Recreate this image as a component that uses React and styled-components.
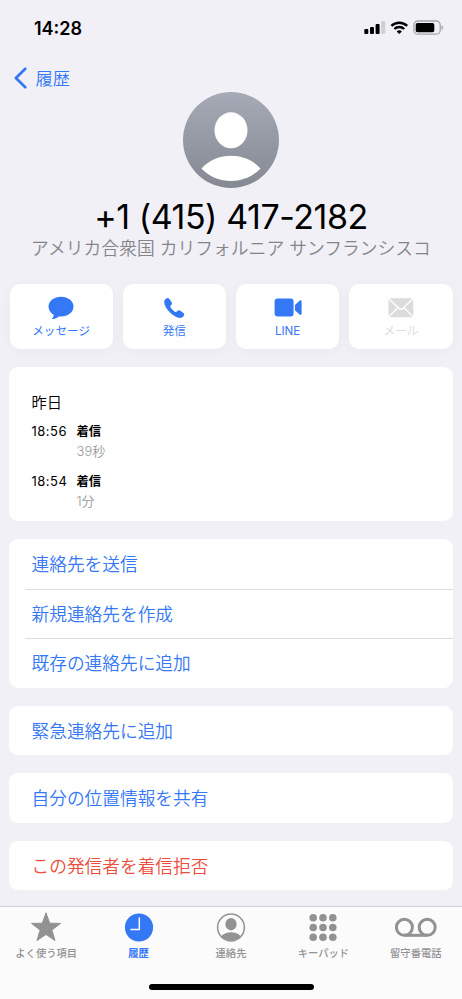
import React from "react";
import styled, { createGlobalStyle } from "styled-components";

const blue = "#3478f6";
const gray = "#929294";

const actions = [
  { label: "メッセージ", icon: "message" },
  { label: "発信", icon: "phone" },
  { label: "LINE", icon: "video" },
  { label: "メール", icon: "mail", disabled: true },
];

const calls = [
  { time: "18:56", type: "着信", duration: "39秒" },
  { time: "18:54", type: "着信", duration: "1分" },
];

const groups = [
  ["連絡先を送信", "新規連絡先を作成", "既存の連絡先に追加"],
  ["緊急連絡先に追加"],
  ["自分の位置情報を共有"],
];

const tabs = [
  { label: "よく使う項目", icon: "star" },
  { label: "履歴", icon: "clock", active: true },
  { label: "連絡先", icon: "person" },
  { label: "キーパッド", icon: "keypad" },
  { label: "留守番電話", icon: "voicemail" },
];

const StatusIcons = () => (
  <svg width="80" height="16" viewBox="0 0 80 16">
    <rect x="0.3" y="9" width="4" height="5" rx="1" />
    <rect x="6" y="7" width="4" height="7" rx="1" />
    <rect x="11.6" y="4" width="4" height="10" rx="1" />
    <rect x="17.2" y="1" width="4" height="13" rx="1" fill="#cfcfd3" />
    <g fill="none" stroke="#000" strokeWidth="2.4">
      <path d="M27.4 5.9a11.3 11.3 0 0 1 15.8 0" />
      <path d="M30.4 9a7 7 0 0 1 9.8 0" />
    </g>
    <path d="M35.3 14.1l-2.6-2.6a3.8 3.8 0 0 1 5.2 0z" />
    <rect x="49.9" y="1" width="26.3" height="13.2" rx="4" fill="none" stroke="#a5a5a9" strokeWidth="1.3" />
    <rect x="51.7" y="2.9" width="18.6" height="9.4" rx="1.8" />
    <path d="M77.5 5.3c2.2.8 2.2 3.8 0 4.6z" fill="#a5a5a9" />
  </svg>
);

const ActionIcon = ({ name }) => (
  <svg width="30" height="26" viewBox="0 0 30 26" fill="currentColor">
    {name === "message" && (
      <path d="M15 2.7c-7 0-12.5 4.3-12.5 9.9 0 3.4 2 6.4 5.1 8.2.2 1.5-.5 2.7-1.6 3.7-.3.4 0 .7.5.6 2.5-.3 4.7-1.4 6.2-2.7.8.1 1.5.2 2.3.2 7 0 12.5-4.4 12.5-10S22 2.7 15 2.7z" />
    )}
    {name === "phone" && (
      <path d="M5.2 8.2c0-1.8.9-2.7 2-3.6 1-.8 2.3-.8 3.2.3l2.1 3c.8 1.2.7 2.1-.2 3l-.8.9c-.4.4-.4.8-.1 1.3.8 1.5 3.3 4 4.8 4.8.5.3.9.3 1.3-.1l.9-.8c.9-.9 1.9-1 3-.2l3 2.1c1.1.8 1.1 2.1.3 3.2-.9 1.1-1.9 1.9-3.7 1.9-3 0-7.2-2.7-10.3-5.7-3.1-3.1-5.500-7.200-5.500-10.100z" />
    )}
    {name === "video" && (
      <>
        <rect x="1.6" y="4.4" width="19" height="18.2" rx="3" />
        <path d="M21.9 11l4.4-4.1c1.2-1.1 2.3-.7 2.3.8v11.8c0 1.5-1.1 1.9-2.3.8l-4.4-4.100z" />
      </>
    )}
    {name === "mail" && (
      <>
        <rect x="2.5" y="4.2" width="24.8" height="19" rx="2" />
        <path
          d="M2.5 4.5l10.3 9.8c1.3 1.2 2.9 1.2 4.2 0l10.3-9.8M2.7 22.9l8.7-8.9M27.1 22.9l-8.700-8.900"
          fill="none"
          stroke="#fff"
          strokeWidth="1.3"
        />
      </>
    )}
  </svg>
);

const TabIcon = ({ name }) => (
  <svg width="44" height="32" viewBox="0 0 44 32" fill="currentColor">
    {name === "star" && (
      <path
        d="M22 1.8l3.7 10.4 10.8.2-8.6 6.700 3.100 10.500-9-6.200-9 6.200 3.100-10.500-8.600-6.700 10.800-.2z"
        stroke="currentColor"
        strokeWidth="1"
        strokeLinejoin="round"
      />
    )}
    {name === "clock" && (
      <>
        <circle cx="22" cy="16.5" r="14.1" />
        <path d="M22.3 7.1v11.3H14" fill="none" stroke="#fff" strokeWidth="1.5" strokeLinecap="round" strokeLinejoin="round" />
      </>
    )}
    {name === "person" && (
      <>
        <clipPath id="person-ring">
          <circle cx="22" cy="16.5" r="13" />
        </clipPath>
        <circle cx="22" cy="16.5" r="13.4" fill="none" stroke="currentColor" strokeWidth="1.5" />
        <ellipse cx="22" cy="13.2" rx="5.6" ry="6.2" />
        <ellipse cx="22" cy="28" rx="10.8" ry="6.8" clipPath="url(#person-ring)" />
      </>
    )}
    {name === "keypad" &&
      [6.7, 16.5, 26.3].map((y) =>
        [12.2, 22, 31.8].map((x) => <circle key={`${x}-${y}`} cx={x} cy={y} r="3.8" />)
      )}
    {name === "voicemail" && (
      <g fill="none" stroke="currentColor" strokeWidth="3">
        <circle cx="10.4" cy="16.3" r="8" />
        <circle cx="33.2" cy="16.3" r="8" />
        <path d="M10.4 24.3h22.8" />
      </g>
    )}
  </svg>
);

const App = () => {
  return (
    <StyledScreen>
      <GlobalStyle />
      <StyledStatusBar>
        <span>14:28</span>
        <StatusIcons />
      </StyledStatusBar>
      <StyledBack>
        <svg width="14" height="22" viewBox="0 0 14 22">
          <path
            d="M11.3 1.7L1.9 11l9.4 9.3"
            fill="none"
            stroke={blue}
            strokeWidth="2.7"
            strokeLinecap="round"
            strokeLinejoin="round"
          />
        </svg>
        <span>履歴</span>
      </StyledBack>
      <StyledProfile>
        <svg width="96" height="96" viewBox="0 0 96 96">
          <defs>
            <linearGradient id="avatar" x1="0" y1="0" x2="0" y2="1">
              <stop offset="0" stopColor="#a5aab6" />
              <stop offset="1" stopColor="#858992" />
            </linearGradient>
          </defs>
          <circle cx="48" cy="48" r="48" fill="url(#avatar)" />
          <ellipse cx="48" cy="38.3" rx="16.5" ry="18" fill="#fff" />
          <path d="M18.5 76.5C26 68 36.5 63.7 48 63.7s22 4.3 29.5 12.8C69.5 85 59 89 48 89s-21.500-4-29.500-12.500z" fill="#fff" />
        </svg>
        <h1>+1 (415) 417-2182</h1>
        <p>アメリカ合衆国 カリフォルニア サンフランシスコ</p>
      </StyledProfile>
      <StyledActions>
        {actions.map(({ label, icon, disabled }) => (
          <StyledAction key={label} disabled={disabled}>
            <ActionIcon name={icon} />
            <span>{label}</span>
          </StyledAction>
        ))}
      </StyledActions>
      <StyledContent>
        <StyledHistory>
          <h2>昨日</h2>
          {calls.map(({ time, type, duration }) => (
            <StyledCall key={time}>
              <time>{time}</time>
              <div>
                <strong>{type}</strong>
                <span>{duration}</span>
              </div>
            </StyledCall>
          ))}
        </StyledHistory>
        {groups.map((rows) => (
          <StyledCard key={rows[0]}>
            {rows.map((row) => (
              <StyledRow key={row}>{row}</StyledRow>
            ))}
          </StyledCard>
        ))}
        <StyledCard>
          <StyledRow $danger>この発信者を着信拒否</StyledRow>
        </StyledCard>
      </StyledContent>
      <StyledTabBar>
        <StyledTabs>
          {tabs.map(({ label, icon, active }) => (
            <StyledTab key={label} $active={active}>
              <TabIcon name={icon} />
              <span>{label}</span>
            </StyledTab>
          ))}
        </StyledTabs>
        <StyledHomeIndicator />
      </StyledTabBar>
    </StyledScreen>
  );
};

const GlobalStyle = createGlobalStyle`
  * {
    box-sizing: border-box;
  }

  body {
    margin: 0;
    background: #f1f0f6;
    font-family: Inter, "Noto Sans CJK JP", sans-serif;
  }

  svg {
    display: block;
    flex-shrink: 0;
  }
`;

const StyledScreen = styled.div`
  width: 462px;
  height: 999px;
  display: flex;
  flex-direction: column;
  overflow: hidden;
  white-space: nowrap;
`;

const StyledStatusBar = styled.div`
  height: 56px;
  padding: 0 18px 0 34px;
  display: flex;
  align-items: center;
  justify-content: space-between;
  font-size: 18px;
  font-weight: 600;
`;

const StyledBack = styled.div`
  height: 36px;
  padding: 8px 0 0 14px;
  display: flex;
  align-items: center;
  gap: 7.5px;
  color: ${blue};
  font-size: 17.2px;
  font-weight: 350;
  line-height: 22px;

  span {
    padding-top: 1px;
  }
`;

const StyledProfile = styled.div`
  height: 192px;
  display: flex;
  flex-direction: column;
  align-items: center;

  h1 {
    margin: 8px 0 0;
    font-size: 34px;
    font-weight: 400;
    line-height: 41px;
    letter-spacing: -0.45px;
  }

  p {
    margin: 1px 0 0;
    color: #858589;
    font-size: 17.8px;
    font-weight: 350;
    line-height: 22px;
  }
`;

const StyledActions = styled.div`
  display: grid;
  grid-template-columns: repeat(4, 1fr);
  gap: 10px;
  padding: 0 9.5px;
`;

const StyledAction = styled.button`
  height: 65px;
  padding: 10px 0 0;
  display: flex;
  flex-direction: column;
  align-items: center;
  border: none;
  border-radius: 10px;
  background: #fff;
  box-shadow: 0 2px 14px rgba(0, 0, 0, 0.035);
  color: ${({ disabled }) => (disabled ? "#dcdcdd" : blue)};
  font-family: inherit;
  font-size: 11.6px;

  span {
    line-height: 16px;
    margin-top: 3px;
  }
`;

const StyledContent = styled.div`
  flex: 1;
  display: flex;
  flex-direction: column;
  gap: 18px;
  padding: 18px 9px 0;
`;

const StyledCard = styled.div`
  border-radius: 9px;
  background: #fff;
`;

const StyledHistory = styled(StyledCard)`
  height: 154px;
  padding: 26px 22.5px 0;

  h2 {
    margin: 0;
    font-size: 15.3px;
    font-weight: 350;
    line-height: 20px;
  }
`;

const StyledCall = styled.div`
  height: 50px;
  padding-top: 8px;
  display: flex;
  font-size: 13px;
  line-height: 21px;

  time {
    width: 45px;
    letter-spacing: 0.5px;
  }

  div {
    display: flex;
    flex-direction: column;
  }

  strong {
    font-size: 12.3px;
  }

  span {
    color: #99999c;
    font-weight: 350;
    line-height: 19px;
  }
`;

const StyledRow = styled.div`
  height: 49.5px;
  margin-left: 16px;
  padding-left: 6.5px;
  color: ${({ $danger }) => ($danger ? "#eb4e3d" : blue)};
  font-size: 17.7px;
  font-weight: 350;
  line-height: 51px;

  & + & {
    border-top: 1px solid #dedee0;
    line-height: 49px;
  }
`;

const StyledTabBar = styled.div`
  height: 93px;
  display: flex;
  flex-direction: column;
  align-items: center;
  justify-content: space-between;
  border-top: 1px solid #cfcfd2;
  background: #fbfbfc;
`;

const StyledTabs = styled.div`
  width: 100%;
  display: grid;
  grid-template-columns: repeat(5, 1fr);
`;

const StyledTab = styled.div`
  padding-top: 4px;
  display: flex;
  flex-direction: column;
  align-items: center;
  color: ${({ $active }) => ($active ? blue : gray)};
  font-size: 10.3px;
  font-weight: ${({ $active }) => ($active ? 700 : 500)};

  span {
    line-height: 14px;
    margin-top: 3px;
  }
`;

const StyledHomeIndicator = styled.div`
  width: 165px;
  height: 6px;
  margin-bottom: 9px;
  border-radius: 3px;
  background: #000;
`;

export default App;
